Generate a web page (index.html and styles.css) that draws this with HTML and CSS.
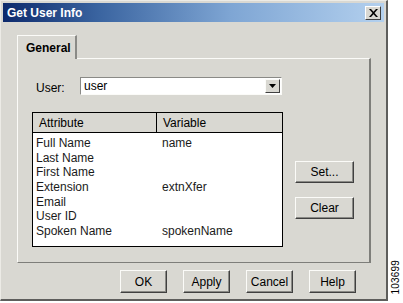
FILE: index.html
```html
<!DOCTYPE html>
<html lang="en">
<head>
    <meta charset="utf-8">
    <title>Get User Info</title>
    <link rel="stylesheet" href="styles.css">
</head>
<body>
    <div class="dialog">
        <div class="titlebar">
            <span class="title">Get User Info</span>
            <div class="closeBtn">
                <svg width="9" height="8" viewBox="0 0 9 8"><path d="M0 0 L2 0 L4.5 2.8 L7 0 L9 0 L5.5 4 L9 8 L7 8 L4.5 5.2 L2 8 L0 8 L3.5 4 Z" fill="#000"/></svg>
            </div>
        </div>
        <div class="content">
            <div class="tabs">
                <div class="tab">General</div>
            </div>
            <div class="panel">
                <div class="userRow">
                    <span class="label">User:</span>
                    <div class="combo">
                        <span class="comboText">user</span>
                        <div class="comboArrow">
                            <svg width="7" height="4" viewBox="0 0 7 4"><path d="M0 0 L7 0 L3.5 4 Z" fill="#000"/></svg>
                        </div>
                    </div>
                </div>
                <div class="mainRow">
                    <div class="table">
                        <div class="tableHead">
                            <div class="colA headCell">Attribute</div>
                            <div class="colB headCell">Variable</div>
                        </div>
                        <div class="tableBody">
                            <div class="row"><span class="colA">Full Name</span><span class="colB">name</span></div>
                            <div class="row"><span class="colA">Last Name</span><span class="colB"></span></div>
                            <div class="row"><span class="colA">First Name</span><span class="colB"></span></div>
                            <div class="row"><span class="colA">Extension</span><span class="colB">extnXfer</span></div>
                            <div class="row"><span class="colA">Email</span><span class="colB"></span></div>
                            <div class="row"><span class="colA">User ID</span><span class="colB"></span></div>
                            <div class="row"><span class="colA">Spoken Name</span><span class="colB">spokenName</span></div>
                        </div>
                    </div>
                    <div class="sideButtons">
                        <div class="btn sideBtn">Set...</div>
                        <div class="btn sideBtn">Clear</div>
                    </div>
                </div>
            </div>
            <div class="footer">
                <div class="btn footBtn">OK</div>
                <div class="btn footBtn">Apply</div>
                <div class="btn footBtn">Cancel</div>
                <div class="btn footBtn">Help</div>
            </div>
        </div>
    </div>
    <div class="side">
        <span class="figNum">103699</span>
    </div>
</body>
</html>
```

FILE: styles.css
```css
body {
    margin: 0;
    width: 403px;
    height: 303px;
    display: flex;
    background: #fff;
    font-family: "Liberation Sans", Arial, sans-serif;
    font-size: 12px;
    color: #000;
    overflow: hidden;
}
.dialog {
    width: 388px;
    height: 301px;
    box-sizing: border-box;
    background: #d9d8d2;
    border: 1px solid #ecebe6;
    border-right: 2px solid #5e5e5c;
    border-bottom: 2px solid #5e5e5c;
    padding: 2px 2px 0 2px;
    display: flex;
    flex-direction: column;
}
.titlebar {
    height: 19px;
    display: flex;
    align-items: center;
    justify-content: space-between;
    padding: 0 3px 0 4px;
    background: linear-gradient(to right, #0d2a6c 0%, #3a64a0 25%, #7fa6d4 60%, #b3d0ee 100%);
}
.title {
    color: #fff;
    font-weight: bold;
    font-size: 12px;
}
.closeBtn {
    width: 16px;
    height: 14px;
    box-sizing: border-box;
    background: #d9d8d2;
    border: 1px solid;
    border-color: #fff #404040 #404040 #fff;
    display: flex;
    align-items: center;
    justify-content: center;
}
.content {
    padding: 13px 0 0 14px;
    display: flex;
    flex-direction: column;
}
.tabs {
    display: flex;
    height: 23px;
}
.tab {
    width: 60px;
    box-sizing: border-box;
    border: 1px solid;
    border-color: #fbfbf8 #8a8a86 transparent #fbfbf8;
    border-right-width: 2px;
    border-bottom: none;
    font-weight: bold;
    padding: 5px 0 0 8px;
    position: relative;
    z-index: 1;
    background: #d9d8d2;
    height: 24px;
}
.panel {
    width: 354px;
    height: 205px;
    box-sizing: border-box;
    border: 1px solid;
    border-color: #fbfbf8 #7e7e7a #7e7e7a #fbfbf8;
    border-right-width: 2px;
    padding: 18px 0 0 14px;
}
.userRow {
    display: flex;
    align-items: center;
    height: 18px;
}
.label {
    width: 48px;
    padding-left: 4px;
    box-sizing: border-box;
    padding-top: 4px;
}
.combo {
    width: 202px;
    height: 18px;
    box-sizing: border-box;
    background: #fff;
    border: 1px solid;
    border-color: #8a8a86 #fbfbf8 #fbfbf8 #8a8a86;
    display: flex;
    align-items: center;
    justify-content: space-between;
}
.comboText {
    padding-left: 3px;
}
.comboArrow {
    width: 15px;
    height: 14px;
    box-sizing: border-box;
    background: #d9d8d2;
    border: 1px solid;
    border-color: #fbfbf8 #404040 #404040 #fbfbf8;
    display: flex;
    align-items: center;
    justify-content: center;
    margin-right: 1px;
}
.mainRow {
    display: flex;
    margin-top: 17px;
}
.table {
    width: 251px;
    height: 135px;
    box-sizing: border-box;
    border: 1px solid #000;
    background: #fff;
}
.tableHead {
    display: flex;
    height: 19px;
    background: #d9d8d2;
    border-bottom: 1px solid #000;
}
.headCell {
    padding: 3px 0 0 6px;
}
.tableHead .colA {
    border-right: 1px solid #000;
}
.colA {
    width: 124px;
    flex: none;
    box-sizing: border-box;
}
.colB {
    flex: 1;
}
.tableBody {
    padding: 3px 0 0 3px;
}
.row {
    display: flex;
    height: 14.7px;
    line-height: 14px;
    color: #1a1a1a;
}
.row .colA {
    width: 126px;
}
.sideButtons {
    display: flex;
    flex-direction: column;
    gap: 14px;
    margin: 49px 0 0 12px;
}
.btn {
    box-sizing: border-box;
    background: #d9d8d2;
    border: 1px solid;
    border-color: #fbfbf8 #404040 #404040 #fbfbf8;
    box-shadow: inset -1px -1px 0 #8a8a86;
    display: flex;
    align-items: center;
    justify-content: center;
}
.sideBtn {
    width: 59px;
    height: 22px;
}
.footer {
    display: flex;
    gap: 16px;
    margin: 7px 0 0 103px;
}
.footBtn {
    width: 47px;
    height: 23px;
}
.side {
    flex: 1;
    display: flex;
    align-items: flex-end;
    justify-content: center;
    padding-bottom: 8px;
}
.figNum {
    writing-mode: vertical-rl;
    transform: rotate(180deg);
    font-size: 10px;
    letter-spacing: 0.2px;
}
```
